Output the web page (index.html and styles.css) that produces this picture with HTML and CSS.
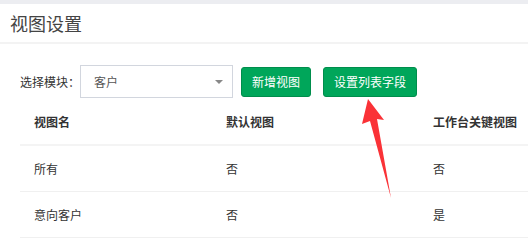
FILE: index.html
```html
<!DOCTYPE html>
<html>
    <head>
        <meta charset="utf-8">
        <title>视图设置</title>
        <link rel="stylesheet" href="styles.css">
    </head>
    <body>
        <div class="box">
            <div class="box-header">视图设置</div>
            <div class="toolbar">
                <label class="toolbar-label">选择模块：</label>
                <div class="select">
                    <span>客户</span>
                    <i class="caret"></i>
                </div>
                <button class="btn btn-add">新增视图</button>
                <button class="btn btn-fields">设置列表字段</button>
            </div>
            <table class="views">
                <thead>
                    <tr>
                        <th class="c1">视图名</th>
                        <th class="c2">默认视图</th>
                        <th>工作台关键视图</th>
                    </tr>
                </thead>
                <tbody>
                    <tr>
                        <td>所有</td>
                        <td>否</td>
                        <td>否</td>
                    </tr>
                    <tr>
                        <td>意向客户</td>
                        <td>否</td>
                        <td>是</td>
                    </tr>
                </tbody>
            </table>
        </div>
        <svg class="pointer" width="528" height="248" viewBox="0 0 528 248">
            <polygon points="368,99 384,120 377,119 391,198 370,121 362,124" fill="#fa3237"/>
        </svg>
    </body>
</html>
```

FILE: styles.css
```css
html, body {
    height: 100%;
}
body {
    margin: 0;
    background-color: #ecedf1;
    font-family: "Noto Sans CJK SC", "Noto Sans", sans-serif;
    color: #333;
    overflow: hidden;
    position: relative;
}

.box {
    margin-top: 4px;
    background-color: white;
    height: 100%;
}

.box-header {
    height: 38px;
    line-height: 38px;
    padding-left: 10px;
    font-size: 18px;
    color: #444;
    border-bottom: 2px solid #f3f3f3;
}

.toolbar {
    display: flex;
    align-items: center;
    padding: 21px 0 0 20px;
    height: 33px;
}

.toolbar-label {
    font-size: 12px;
    width: 60px;
}

.select {
    box-sizing: border-box;
    width: 153px;
    height: 33px;
    border: 1px solid #d2d6de;
    display: flex;
    align-items: center;
    justify-content: space-between;
    padding: 0 9px 0 13px;
    font-size: 12px;
    color: #555;
}

.caret {
    width: 0;
    height: 0;
    border-left: 4px solid transparent;
    border-right: 4px solid transparent;
    border-top: 4px solid #888;
}

.btn {
    box-sizing: border-box;
    height: 30px;
    padding: 0 10px;
    margin-left: 8px;
    background-color: #00a65a;
    border: 1px solid #008d4c;
    border-radius: 3px;
    color: white;
    font-family: inherit;
    font-size: 12px;
}
.btn-add {
    width: 70px;
}
.btn-fields {
    width: 94px;
    margin-left: 12px;
}

.views {
    margin: 1px 0 0 20px;
    width: calc(100% - 20px);
    border-collapse: collapse;
    font-size: 12px;
}
.views th {
    text-align: left;
    font-weight: bold;
    height: 45px;
    border-bottom: 2px solid #f4f4f4;
}
.views td {
    height: 45px;
    border-bottom: 1px solid #f0f0f0;
}
.views th, .views td {
    padding: 0 0 0 14px;
}
.views .c1 {
    width: 178px;
}
.views .c2 {
    width: 193px;
}

.pointer {
    position: absolute;
    left: 0;
    top: 0;
}
```
